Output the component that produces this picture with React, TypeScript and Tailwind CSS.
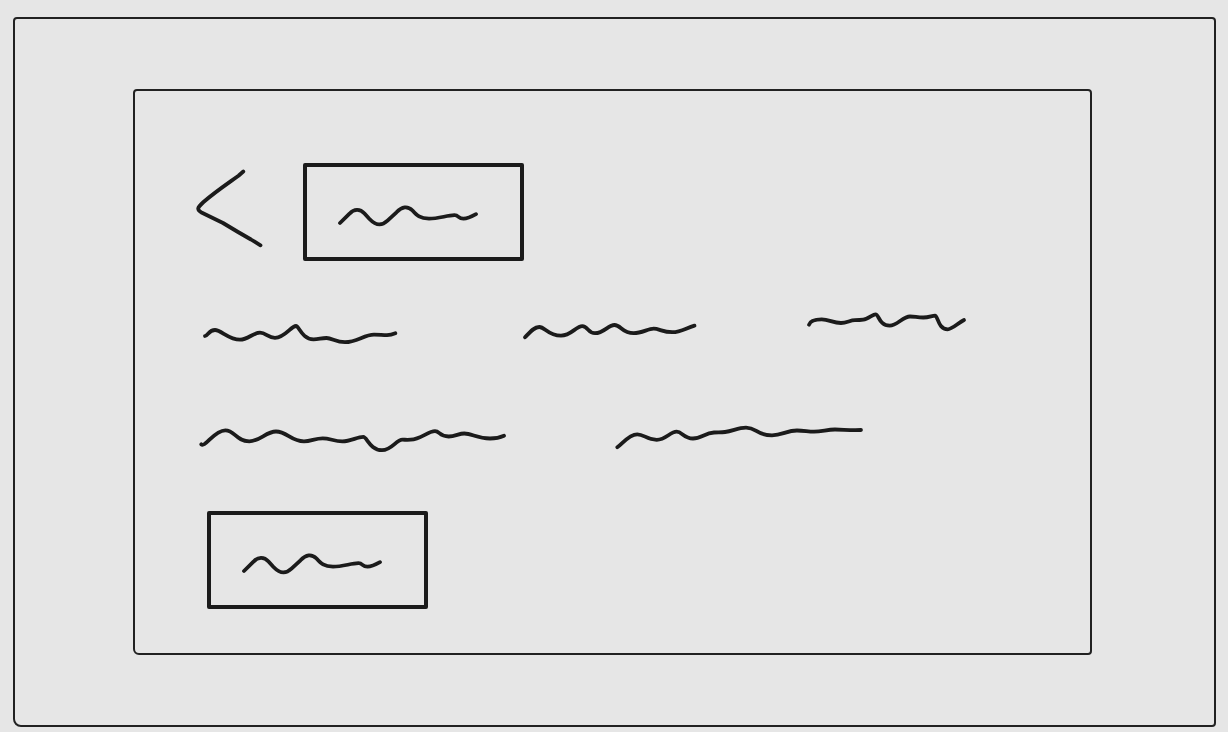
import type { ReactNode } from "react";

const lines = {
  label:
    "M4 21L13.500 11.700C18 6.700 24 6.500 28.500 11.500L33.500 17C40 23.700 45.500 24.300 51.500 18.700L60.500 10.300C66 4.500 71.500 3.500 76.500 8.500C81 13.500 84 16.700 93 16.700C103 16.700 111 13.300 118.500 13.200C123 13.200 122 16.700 127.500 16.700Q132 16.700 140 12.200",
  first:
    "M5 16C8 15.500 9 10 15 10C21 10 29 19.700 40 19.700C48 19.700 53 12.700 60 12.700C66 12.700 68 17.800 75 17.800C85 17.800 91 6 96 6C99 6 102 19.300 113.500 19.300C119 19.300 121 18 126.500 18C132 18 136 22.200 145 22.200C157 22.200 164 14.700 174 14.700C180 14.700 182 15.200 187 15.200Q191 15 195.300 13.300",
  second:
    "M5 19.300C10 14 14 9 19.300 9C25 9 28 17.700 41 17.700C51 17.700 56 8.200 62.300 8.200C68 8.200 68 15.200 75 15.200C84 15.200 88 7 94.500 7C101 7 102 15.200 113.700 15.200C122 15.200 128 10.700 133.700 10.700C139 10.700 143 14.200 152.300 14.200C161 14.200 166 10 174.500 7.700",
  third:
    "M5 16.700C6 13 11 11.300 17.700 11.300C25 11.300 29 15 37 15C43 15 46 12.200 51 12.200C54 12.200 56 12.200 59.300 11.700C64 11 69 6.300 71.500 6.300C75 6.300 75 17.700 85.700 17.700C93 17.700 99 8.500 106 8.500C111 8.500 113 9.500 119.300 9.500C125 9.500 128 7.700 131 7.700C134 7.700 134 21.300 143.700 21.300C148 21.300 154 15 160 12",
  fourth:
    "M5.300 20.300C9 24 18 6.300 29.300 6.300C39 6.300 40 17.300 53.300 17.300C64 17.300 70 7.500 80 7.500C91 7.500 95 17.300 108 17.300C115 17.300 119 14.300 126.700 14.300C134 14.300 138 17.300 146.300 17.300C155 17.300 161 12.900 167.300 12.900C171 12.900 174 26.200 186 26.200C196 26.200 200 15.700 206.500 15.700C209 15.700 211 16 214.700 15.700C225 15 232 7.200 239 7.200C244 7.200 243 12.500 252.700 12.500C259 12.500 263 9.500 268.300 9.500C276 9.500 281 14.500 294 14.500Q302 14.500 308 11.700",
  fifth:
    "M5.300 25.200C10 22 17 12.300 25.300 12.300C32 12.300 35 17.800 44.700 17.800C54 17.800 58 9.700 64.700 9.700C70 9.700 72 16.500 81 16.500C89 16.500 93 11 102 10.500C106 10.200 109 10.500 113 10C121 9 126 5.700 134 5.700C145 5.700 144 13.300 160 13.300C170 13.300 175 8.500 185 8.500C192 8.500 196 9.700 202 9.700C210 9.700 215 7.500 223 7.500C231 7.500 238 8.500 249 8",
};

function Sketch({ d, box, className }: { d: string; box: string; className: string }) {
  return (
    <svg
      viewBox={box}
      aria-hidden="true"
      className={`block shrink-0 fill-none stroke-[#1b1b1b] stroke-[3.8] ${className}`}
      strokeLinecap="round"
      strokeLinejoin="round"
    >
      <path d={d} />
    </svg>
  );
}

function SketchButton({ label }: { label: string }) {
  return (
    <button
      type="button"
      aria-label={label}
      className="cursor-pointer rounded-xs border-4 border-[#1b1b1b] pt-[35px] pr-10 pb-[27px] pl-[29px]"
    >
      <Sketch d={lines.label} box="0 0 144 28" className="h-7 w-36" />
    </button>
  );
}

function Row({ children, className }: { children: ReactNode; className: string }) {
  return <div className={`flex flex-wrap gap-x-26 ${className}`}>{children}</div>;
}

export default function App() {
  return (
    <main className="min-h-screen bg-[#e6e6e6] pt-[17px] pr-3 pb-[5px] pl-[13px] font-['Liberation_Sans',sans-serif]">
      <div className="rounded-t-sm rounded-br-sm rounded-bl-lg border-2 border-[#222] py-[70px] pr-[122px] pl-[118px]">
        <section className="rounded-t-sm rounded-br-sm rounded-bl-md border-2 border-[#222] pt-[72px] pb-11 pl-[57px]">
          <header className="flex items-center gap-[35px]">
            <button type="button" aria-label="Back" className="cursor-pointer">
              <Sketch
                d="M51.300 5.500L46.500 9.700C35 18 23 26 11.500 36C5 42 4.500 43.500 10 46.800L31 57L46 66L59 73.500L68.500 79.300"
                box="0 0 76 92"
                className="h-23 w-19"
              />
            </button>
            <SketchButton label="Title" />
          </header>
          <Row className="mt-[47px] pl-2">
            <Sketch d={lines.first} box="0 -12 216 40" className="h-10 w-54" />
            <Sketch d={lines.second} box="0 -10 180 40" className="h-10 w-45" />
            <Sketch d={lines.third} box="0 0 166 40" className="h-10 w-[166px]" />
          </Row>
          <Row className="mt-[74px] pl-1">
            <Sketch d={lines.fourth} box="0 -2 312 36" className="h-9 w-78" />
            <Sketch d={lines.fifth} box="0 0 256 36" className="h-9 w-64" />
          </Row>
          <Row className="mt-[53px] pl-[15px]">
            <SketchButton label="Submit" />
          </Row>
        </section>
      </div>
    </main>
  );
}
